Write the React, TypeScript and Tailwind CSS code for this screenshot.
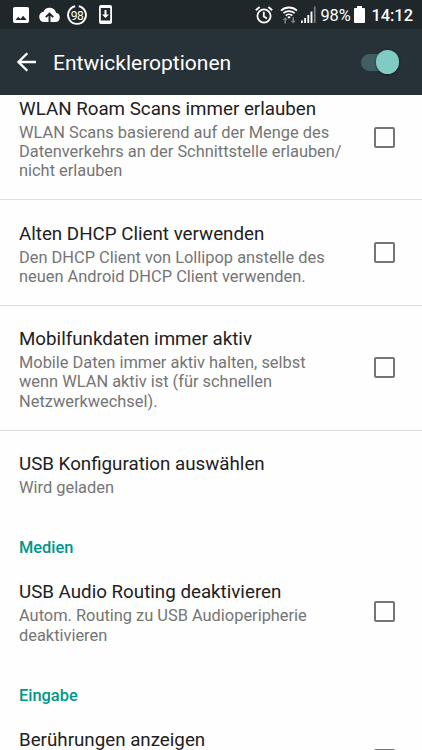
import { useState } from "react";

type Entry =
  | { kind: "category"; title: string }
  | {
      kind: "preference";
      id: string;
      title: string;
      summary: string[];
      checkable?: boolean;
      divider?: boolean;
    };

const ENTRIES: Entry[] = [
  {
    kind: "preference",
    id: "roam",
    title: "WLAN Roam Scans immer erlauben",
    summary: [
      "WLAN Scans basierend auf der Menge des",
      "Datenverkehrs an der Schnittstelle erlauben/",
      "nicht erlauben",
    ],
    checkable: true,
    divider: true,
  },
  {
    kind: "preference",
    id: "dhcp",
    title: "Alten DHCP Client verwenden",
    summary: [
      "Den DHCP Client von Lollipop anstelle des",
      "neuen Android DHCP Client verwenden.",
    ],
    checkable: true,
    divider: true,
  },
  {
    kind: "preference",
    id: "mobile",
    title: "Mobilfunkdaten immer aktiv",
    summary: [
      "Mobile Daten immer aktiv halten, selbst",
      "wenn WLAN aktiv ist (für schnellen",
      "Netzwerkwechsel).",
    ],
    checkable: true,
    divider: true,
  },
  {
    kind: "preference",
    id: "usb",
    title: "USB Konfiguration auswählen",
    summary: ["Wird geladen"],
  },
  { kind: "category", title: "Medien" },
  {
    kind: "preference",
    id: "audio",
    title: "USB Audio Routing deaktivieren",
    summary: ["Autom. Routing zu USB Audioperipherie", "deaktivieren"],
    checkable: true,
  },
  { kind: "category", title: "Eingabe" },
  {
    kind: "preference",
    id: "touches",
    title: "Berührungen anzeigen",
    summary: [],
    checkable: true,
  },
];

function StatusBar() {
  return (
    <div className="flex h-[29px] shrink-0 items-center justify-between bg-[#20272b] pr-[9px] pl-[13px] text-white">
      <div className="flex items-center">
        {/* Screenshot */}
        <svg className="h-4 w-4" viewBox="0 0 16 16" fill="currentColor">
          <path
            fillRule="evenodd"
            d="M1.8 0h12.4A1.8 1.8 0 0 1 16 1.8v12.4a1.8 1.8 0 0 1-1.8 1.8H1.8A1.8 1.8 0 0 1 0 14.200V1.800A1.8 1.8 0 0 1 1.8 0ZM2.500 13h11.200L10.100 8.800 7.500 12 5.300 9.800Z"
          />
        </svg>
        {/* Cloud upload */}
        <svg className="ml-[10px] h-[15px] w-[21px]" viewBox="0 0 21 15">
          <path
            fill="#fff"
            d="M17 5.700A6.600 6.600 0 0 0 4.500 4.700 5.200 5.200 0 0 0 5.200 15h11.100a4.700 4.700 0 0 0 .7-9.300Z"
          />
          <path d="M10.500 15V7M6.800 10.200l3.700-3.700 3.700 3.700" fill="none" stroke="#20272b" strokeWidth="1.900" />
        </svg>
        {/* Battery level ring */}
        <span className="relative ml-[7px] flex h-5 w-5 items-center justify-center">
          <svg className="absolute inset-0 h-5 w-5" viewBox="0 0 20 20" fill="none">
            <path
              d="M11.800 1.300A8.900 8.900 0 1 1 8.200 1.300"
              stroke="currentColor"
              strokeWidth="1.900"
            />
          </svg>
          <span className="mt-[3px] text-[12px] leading-none tracking-[-0.600px]">98</span>
        </span>
        {/* System download */}
        <svg className="ml-[12px] h-[19px] w-[13px]" viewBox="0 0 13 19">
          <path
            fill="#fff"
            fillRule="evenodd"
            d="M2 0h9a2 2 0 0 1 2 2v15a2 2 0 0 1-2 2H2a2 2 0 0 1-2-2V2a2 2 0 0 1 2-2ZM1.800 3v12.500h9.400V3Z"
          />
          <path fill="#fff" d="M5.500 5h2v4.500H10L6.500 13 3 9.500h2.500Z" />
        </svg>
      </div>

      <div className="flex items-center">
        {/* Alarm */}
        <svg
          className="h-[18px] w-[18px]"
          viewBox="0 0 18 18"
          fill="none"
          stroke="currentColor"
          strokeWidth="1.800"
        >
          <circle cx="9" cy="10" r="6.600" />
          <path d="M8.800 5.800v4.600l3.200 2M.8 4.200 4.600 1M17.200 4.200 13.400 1" />
        </svg>
        {/* Wi-Fi with traffic arrows */}
        <svg className="ml-[7px] h-[18px] w-[18px]" viewBox="0 0 18 18" fill="none">
          <g stroke="#fff" strokeWidth="1.800">
            <path d="M1 4.700a11.600 11.600 0 0 1 16 0" />
            <path d="M3.400 7.200a8.300 8.300 0 0 1 11.200 0" />
            <path d="M5.700 9.600a4.900 4.900 0 0 1 6.600 0" />
          </g>
          <path d="M7.200 11a2.800 2.800 0 0 1 3.600 0L9 12.800Z" fill="#fff" />
          <path
            d="M5.200 11.200 7.800 14H6v3.500H4.400V14H2.600ZM13.200 17.500l-2.600-2.800h1.800v-3.500H14v3.500h1.800Z"
            fill="#7b8083"
          />
        </svg>
        {/* Signal */}
        <svg className="ml-[3px] h-[17px] w-[15px]" viewBox="0 0 15 17" fill="currentColor">
          <path d="M0 14.500h1.800V17H0ZM3.200 12H5v5H3.200ZM6.400 9h1.800v8H6.400ZM9.600 5.500h1.800V17H9.600Z" />
          <path d="M12.900.5h1.700V17h-1.700Z" fill="#7b8083" />
        </svg>
        <span className="mt-[3px] ml-[4px] w-[31px] text-[16.400px] leading-none whitespace-nowrap">
          98%
        </span>
        {/* Battery */}
        <svg className="ml-[3px] h-[17px] w-[11px]" viewBox="0 0 11 17" fill="currentColor">
          <path d="M3 0h5v2h2a1 1 0 0 1 1 1v13a1 1 0 0 1-1 1H1a1 1 0 0 1-1-1V3a1 1 0 0 1 1-1h2Z" />
        </svg>
        <span className="mt-[3px] ml-[6px] text-[16.400px] leading-none font-medium whitespace-nowrap">
          14:12
        </span>
      </div>
    </div>
  );
}

function Toggle({ on, onChange }: { on: boolean; onChange: () => void }) {
  return (
    <button
      role="switch"
      aria-checked={on}
      onClick={onChange}
      className={`flex h-[17px] w-[38px] items-center rounded-full ${
        on ? "justify-end bg-[#415f62]" : "justify-start bg-[#4d5a60]"
      }`}
    >
      <span
        className={`h-[23.500px] w-[23.500px] shrink-0 rounded-full shadow-[0_1px_3px_rgba(0,0,0,0.45)] ${
          on ? "bg-[#80cbc4]" : "bg-[#b9b9b9]"
        }`}
      />
    </button>
  );
}

export default function App() {
  const [enabled, setEnabled] = useState(true);
  const [checked, setChecked] = useState<Record<string, boolean>>({});

  const toggle = (id: string) => setChecked((prev) => ({ ...prev, [id]: !prev[id] }));

  return (
    <div className="flex h-[750px] w-[422px] flex-col overflow-hidden bg-[#fefefe] font-[Roboto,sans-serif]">
      <StatusBar />

      <header className="z-10 flex h-[66px] shrink-0 items-center bg-[#263238] pr-[23px] pl-[17px] text-white">
        <button aria-label="Zurück">
          <svg
            className="h-5 w-5"
            viewBox="0 0 20 20"
            fill="none"
            stroke="currentColor"
            strokeWidth="2.300"
          >
            <path d="M19 10H1.800M10.300 1.200 1.500 10l8.800 8.800" />
          </svg>
        </button>
        <h1 className="mt-[3px] ml-4 flex-1 text-[21px] leading-none">Entwickleroptionen</h1>
        <Toggle on={enabled} onChange={() => setEnabled(!enabled)} />
      </header>

      {/* List is scrolled, so the first row starts underneath the header */}
      <main className="-mt-[19.500px]">
        {ENTRIES.map((entry) =>
          entry.kind === "category" ? (
            <h2
              key={entry.title}
              className="h-[43.250px] pt-[22px] pl-[19px] text-[16.400px] leading-[19.250px] font-medium text-[#009688]"
            >
              {entry.title}
            </h2>
          ) : (
            <div
              key={entry.id}
              className={`flex items-center justify-between pt-[21.250px] pr-[27px] pb-[18.750px] pl-[19px] ${
                entry.divider ? "border-b border-[#dedede]" : ""
              } ${entry.summary.length === 0 ? "h-[104.500px]" : ""}`}
            >
              <div className={entry.summary.length === 0 ? "-mt-[0.500px] self-start" : ""}>
                <div className="text-[18.750px] leading-[25px] whitespace-nowrap text-[#212121]">
                  {entry.title}
                </div>
                <div className="mt-px text-[16.400px] leading-[19.250px] whitespace-nowrap text-[#757575]">
                  {entry.summary.map((line) => (
                    <div key={line}>{line}</div>
                  ))}
                </div>
              </div>
              {entry.checkable && (
                <button
                  role="checkbox"
                  aria-checked={!!checked[entry.id]}
                  aria-label={entry.title}
                  onClick={() => toggle(entry.id)}
                  className={`-mt-[2px] h-[21px] w-[21px] shrink-0 rounded-[2px] border-2 border-[#757575] ${
                    checked[entry.id] ? "bg-[#009688]" : ""
                  }`}
                />
              )}
            </div>
          ),
        )}
      </main>
    </div>
  );
}
